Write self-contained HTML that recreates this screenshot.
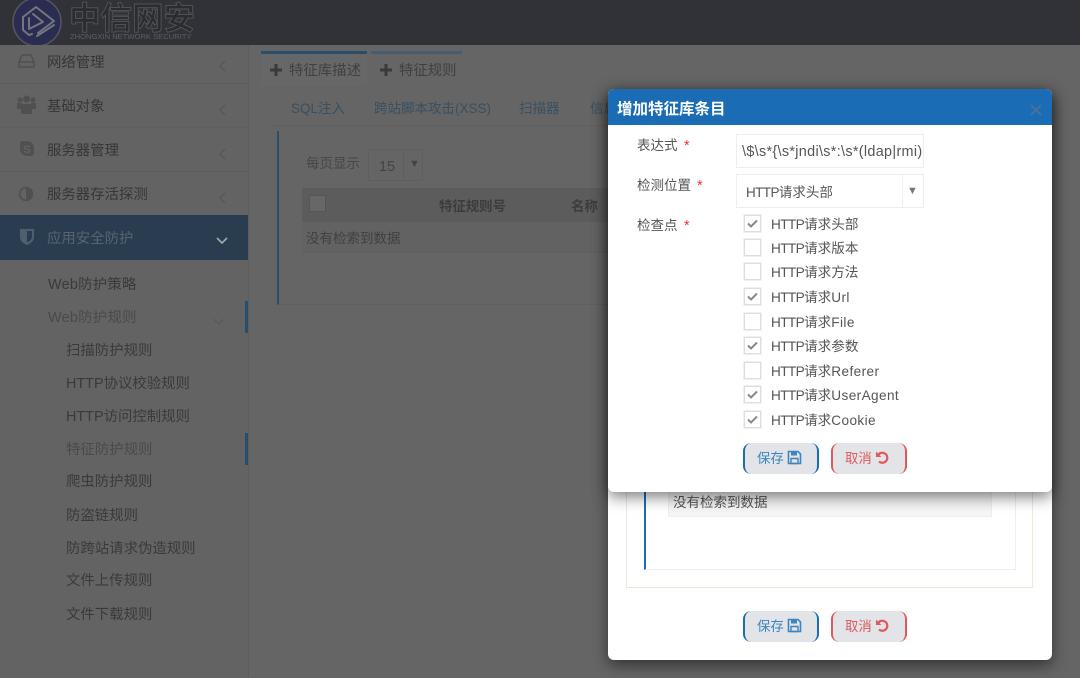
<!DOCTYPE html>
<html lang="zh"><head><meta charset="utf-8"><title>增加特征库条目</title>
<style>
html,body{margin:0;padding:0;width:1080px;height:678px;overflow:hidden;background:#656565}
body{position:relative;font:14.4px/20px "Liberation Sans","Noto Sans CJK SC",sans-serif;color:#333}
.a{position:absolute;white-space:nowrap}
.b{position:absolute}
.nav{color:#363636}
.sub{color:#3a3a3a}
.tab{color:#3a4f5f;font-size:13.5px}
.m{font-size:13.5px}
.cb{position:absolute;left:744px;width:15px;height:15px;border:1px solid #dedede;background:#fff;box-shadow:0 0 0 .5px #e2e2e2}
.cl{position:absolute;left:771px;color:#555;white-space:nowrap;font-size:13.6px}
.h{letter-spacing:-.6px}
.l{letter-spacing:.4px}
.btn{position:absolute;width:76px;height:31px;background:#e2e4e7;border-radius:8px;box-sizing:border-box;font-size:13.4px}
.bl{border-left:2px solid #1a6cb5;border-right:2px solid #1a6cb5;color:#3d85c0}
.rd{border-left:2px solid #dc5a5e;border-right:2px solid #dc5a5e;color:#de5a5e}
.btn span{position:absolute;left:12px;top:6px;white-space:nowrap}
.btn svg{position:absolute;left:42px;top:7px}
</style></head><body>

<!-- top bar -->
<div class="b" style="left:0;top:0;width:1080px;height:45px;background:#303237"></div>
<svg class="b" style="left:12px;top:0" width="52" height="45" viewBox="0 0 52 45">
<circle cx="25" cy="22" r="24" fill="#2b2c52" stroke="#55565f" stroke-width="1.5"/>
<g fill="none" stroke="#74767e" stroke-width="2" stroke-linejoin="round" stroke-linecap="round">
<path d="M11 17 L11 30 L17 35 L20 34"/>
<path d="M11 17 L24 7 L42 21 L26 33"/>
<path d="M17 18 L17 29 L31 22 L21 14"/>
<path d="M25 36 L42 25"/>
</g></svg>
<div class="a" style="left:69px;top:0;font-size:31.5px;line-height:36px;color:#2b2c30;-webkit-text-stroke:1px #505156;font-weight:bold">中信网安</div>
<div class="a" style="left:70px;top:33px;font-size:7.6px;line-height:8px;color:#5e5f63">ZHONGXIN NETWORK SECURITY</div>

<!-- sidebar -->
<div class="b" style="left:0;top:45px;width:248px;height:633px;background:#636363;border-right:1px solid #5e5e5e"></div>
<div class="b" style="left:0;top:83px;width:248px;height:1px;background:#5d5d5d"></div>
<div class="b" style="left:0;top:127px;width:248px;height:1px;background:#5f5f5f"></div>
<div class="b" style="left:0;top:171px;width:248px;height:1px;background:#5d5d5d"></div>
<div class="b" style="left:0;top:215px;width:248px;height:45px;background:#2a3d50"></div>

<svg class="b" style="left:18px;top:53px" width="17" height="16" viewBox="0 0 17 16"><path d="M4 2H13L16 9V14H1V9Z M1 9H16" fill="none" stroke="#4f4f4f" stroke-width="1.4"/></svg>
<svg class="b" style="left:16px;top:95px" width="21" height="20" viewBox="0 0 21 20" fill="#505050"><circle cx="4" cy="5" r="2.5"/><circle cx="17" cy="5" r="2.5"/><circle cx="10.5" cy="4" r="3.5"/><path d="M1 8h5v6H1zM15 8h5v6h-5z"/><path d="M5 9h11v8q0 2-2 2H7q-2 0-2-2z"/></svg>
<svg class="b" style="left:19px;top:140px" width="16" height="17" viewBox="0 0 16 17"><path d="M4 1h3q8 0 8 8v4q0 3-3 3H9Q1 16 1 8V4q0-3 3-3z" fill="#505050"/><text x="8" y="13" font-size="11" font-weight="bold" text-anchor="middle" fill="#636363" font-family="Liberation Sans">S</text></svg>
<svg class="b" style="left:18px;top:186px" width="16" height="16" viewBox="0 0 16 16"><circle cx="8" cy="8" r="7.2" fill="#505050"/><path d="M8 2.5a5.5 5.5 0 0 0 0 11z" fill="#636363"/></svg>
<svg class="b" style="left:20px;top:228px" width="14" height="17" viewBox="0 0 14 17"><path d="M0 1H14V9Q14 14 7 17Q0 14 0 9Z" fill="#505f6e"/><path d="M7 3H12V9Q12 12 7 14.5Z" fill="#2a3d50"/></svg>

<div class="a nav" style="left:47px;top:53px">网络管理</div>
<div class="a nav" style="left:47px;top:97px">基础对象</div>
<div class="a nav" style="left:47px;top:141px">服务器管理</div>
<div class="a nav" style="left:47px;top:185px">服务器存活探测</div>
<div class="a" style="left:47px;top:229px;color:#566472">应用安全防护</div>

<svg class="b" style="left:219px;top:60px" width="8" height="12" viewBox="0 0 8 12"><path d="M6 1 1 6l5 5" fill="none" stroke="#555" stroke-width="1.2"/></svg>
<svg class="b" style="left:219px;top:104px" width="8" height="12" viewBox="0 0 8 12"><path d="M6 1 1 6l5 5" fill="none" stroke="#555" stroke-width="1.2"/></svg>
<svg class="b" style="left:219px;top:148px" width="8" height="12" viewBox="0 0 8 12"><path d="M6 1 1 6l5 5" fill="none" stroke="#555" stroke-width="1.2"/></svg>
<svg class="b" style="left:219px;top:192px" width="8" height="12" viewBox="0 0 8 12"><path d="M6 1 1 6l5 5" fill="none" stroke="#555" stroke-width="1.2"/></svg>
<svg class="b" style="left:216px;top:237px" width="12" height="8" viewBox="0 0 12 8"><path d="M1 1l5 5 5-5" fill="none" stroke="#a4a9ae" stroke-width="1.6"/></svg>

<div class="a sub" style="left:48px;top:275px;letter-spacing:.25px">Web防护策略</div>
<div class="a" style="left:48px;top:308px;color:#4a4a4a;letter-spacing:.25px">Web防护规则</div>
<svg class="b" style="left:213px;top:318px" width="12" height="7" viewBox="0 0 12 7"><path d="M1 1l5 5 5-5" fill="none" stroke="#575757" stroke-width="1"/></svg>
<div class="b" style="left:245px;top:301px;width:3px;height:32px;background:#284e6d"></div>
<div class="a sub" style="left:66px;top:341px">扫描防护规则</div>
<div class="a sub" style="left:66px;top:374px">HTTP协议校验规则</div>
<div class="a sub" style="left:66px;top:407px">HTTP访问控制规则</div>
<div class="a" style="left:66px;top:440px;color:#4a4a4a">特征防护规则</div>
<div class="b" style="left:245px;top:433px;width:3px;height:32px;background:#284e6d"></div>
<div class="a sub" style="left:66px;top:472px">爬虫防护规则</div>
<div class="a sub" style="left:66px;top:506px">防盗链规则</div>
<div class="a sub" style="left:66px;top:539px">防跨站请求伪造规则</div>
<div class="a sub" style="left:66px;top:571px">文件上传规则</div>
<div class="a sub" style="left:66px;top:605px">文件下载规则</div>

<!-- main content -->
<div class="b" style="left:261px;top:51px;width:106px;height:3px;background:#284e6d"></div>
<div class="b" style="left:371px;top:51px;width:91px;height:3px;background:#465d70"></div>
<div class="b" style="left:261px;top:54px;width:106px;height:32px;background:#676767"></div>
<svg class="b" style="left:270px;top:64px" width="12" height="12" viewBox="0 0 12 12"><path d="M6 0v12M0 6h12" stroke="#3a3a3a" stroke-width="3"/></svg>
<div class="a" style="left:289px;top:61px;color:#404040">特征库描述</div>
<svg class="b" style="left:380px;top:64px" width="12" height="12" viewBox="0 0 12 12"><path d="M6 0v12M0 6h12" stroke="#3a3a3a" stroke-width="3"/></svg>
<div class="a" style="left:399px;top:61px;color:#404040">特征规则</div>

<div class="a tab" style="left:291px;top:99px">SQL注入</div>
<div class="a tab" style="left:374px;top:99px">跨站脚本攻击(XSS)</div>
<div class="a tab" style="left:519px;top:99px">扫描器</div>
<div class="a tab" style="left:590px;top:99px">信息</div>
<div class="b" style="left:272px;top:125px;width:340px;height:1px;background:#5f5f5f"></div>

<div class="b" style="left:277px;top:131px;width:331px;height:174px;border-left:2.5px solid #284e6d;border-bottom:1px solid #5f5f5f;box-sizing:border-box"></div>
<div class="a m" style="left:306px;top:154px;color:#464646">每页显示</div>
<div class="b" style="left:368px;top:149px;width:55px;height:32px;border:1px solid #5f5f5f;box-sizing:border-box"></div>
<div class="b" style="left:403px;top:149px;width:1px;height:32px;background:#5f5f5f"></div>
<div class="a" style="left:379px;top:157px;color:#444">15</div>
<div class="a" style="left:409px;top:154px;font-size:11px;color:#444">▼</div>
<div class="b" style="left:302px;top:188px;width:306px;height:34px;background:#5c5c5c"></div>
<div class="b" style="left:302px;top:222px;width:306px;height:31px;background:#626262;border-bottom:1px solid #5e5e5e;box-sizing:border-box"></div>
<div class="b" style="left:309px;top:195px;width:17px;height:17px;background:#676767;border:1px solid #555;box-sizing:border-box"></div>
<div class="a" style="left:439px;top:197px;font-weight:bold;color:#3c3c3c;font-size:13.4px">特征规则号</div>
<div class="a" style="left:571px;top:197px;font-weight:bold;color:#3c3c3c;font-size:13.4px">名称</div>
<div class="a m" style="left:306px;top:229px;color:#404040">没有检索到数据</div>

<!-- lower modal -->
<div class="b" style="left:608px;top:89px;width:444px;height:571px;background:#fff;border-radius:6px;box-shadow:0 5px 15px rgba(0,0,0,.5)"></div>
<div class="b" style="left:626px;top:480px;width:407px;height:108px;border:1px solid #e3edd8;box-sizing:border-box"></div>
<div class="b" style="left:644px;top:480px;width:372px;height:90px;border-right:1px solid #eee;border-bottom:1px solid #eee;border-left:2.5px solid #1a6cb5;box-sizing:border-box"></div>
<div class="b" style="left:668px;top:488px;width:324px;height:29px;background:#f5f5f5;border:1px solid #eee;box-sizing:border-box"></div>
<div class="a m" style="left:673px;top:493px;color:#555">没有检索到数据</div>
<div class="btn bl" style="left:743px;top:611px"><span>保存</span><svg width="15" height="15" viewBox="0 0 15 15"><path d="M1.5 1.5H11L13.5 4V13.5H1.5Z" fill="none" stroke="#3d85c0" stroke-width="1.6"/><path d="M4 1.5h6v4H4z" fill="#3d85c0"/><path d="M4 8.5h7v5H4z" fill="none" stroke="#3d85c0" stroke-width="1.4"/></svg></div>
<div class="btn rd" style="left:831px;top:611px"><span>取消</span><svg width="15" height="15" viewBox="0 0 15 15"><path d="M3.4 4.6A5 5 0 1 1 4 11.5" fill="none" stroke="#de5a5e" stroke-width="2.2"/><path d="M1 1.5V7H6.5Z" fill="#de5a5e"/></svg></div>

<!-- top modal -->
<div class="b" style="left:608px;top:89px;width:444px;height:403px;background:#fff;border-radius:6px;box-shadow:0 5px 15px rgba(0,0,0,.5)"></div>
<div class="b" style="left:608px;top:89px;width:444px;height:36px;background:#1a6cb5;border-radius:6px 6px 0 0"></div>
<div class="a" style="left:617px;top:100px;color:#fff;font-weight:bold;font-size:15.5px">增加特征库条目</div>
<svg class="b" style="left:1030px;top:104px" width="12" height="12" viewBox="0 0 12 12"><path d="M1 1l10 10M11 1 1 11" stroke="#45709c" stroke-width="2.2"/></svg>

<div class="a m" style="left:637px;top:136px;color:#555">表达式</div>
<div class="a" style="left:684px;top:136px;color:#e33">*</div>
<div class="a m" style="left:637px;top:176px;color:#555">检测位置</div>
<div class="a" style="left:697px;top:176px;color:#e33">*</div>
<div class="a m" style="left:637px;top:216px;color:#555">检查点</div>
<div class="a" style="left:684px;top:216px;color:#e33">*</div>

<div class="b" style="left:736px;top:134px;width:188px;height:34px;border:1px solid #eee;box-sizing:border-box"></div>
<div class="a" style="left:742px;top:142px;width:180px;overflow:hidden;color:#555;font-size:14.4px;letter-spacing:.32px">\$\s*{\s*jndi\s*:\s*(ldap|rmi)</div>
<div class="b" style="left:736px;top:174px;width:188px;height:34px;border:1px solid #eee;box-sizing:border-box"></div>
<div class="b" style="left:902px;top:175px;width:1px;height:32px;background:#eee"></div>
<div class="a m" style="left:746px;top:183px;color:#555"><span class="h">HTTP</span>请求头部</div>
<div class="a" style="left:907px;top:181px;font-size:11px;color:#777">▼</div>

<div class="cb" style="top:215px"><svg width="15" height="15" viewBox="0 0 15 15"><path d="M3 7.5l3 3 6-6" fill="none" stroke="#888" stroke-width="2"/></svg></div>
<div class="cl" style="top:215px"><span class="h">HTTP</span>请求头部</div>
<div class="cb" style="top:239px"></div>
<div class="cl" style="top:239px"><span class="h">HTTP</span>请求版本</div>
<div class="cb" style="top:263px"></div>
<div class="cl" style="top:263px"><span class="h">HTTP</span>请求方法</div>
<div class="cb" style="top:288px"><svg width="15" height="15" viewBox="0 0 15 15"><path d="M3 7.5l3 3 6-6" fill="none" stroke="#888" stroke-width="2"/></svg></div>
<div class="cl" style="top:288px"><span class="h">HTTP</span>请求<span class="l">Url</span></div>
<div class="cb" style="top:313px"></div>
<div class="cl" style="top:313px"><span class="h">HTTP</span>请求<span class="l">File</span></div>
<div class="cb" style="top:337px"><svg width="15" height="15" viewBox="0 0 15 15"><path d="M3 7.5l3 3 6-6" fill="none" stroke="#888" stroke-width="2"/></svg></div>
<div class="cl" style="top:337px"><span class="h">HTTP</span>请求参数</div>
<div class="cb" style="top:362px"></div>
<div class="cl" style="top:362px"><span class="h">HTTP</span>请求<span class="l">Referer</span></div>
<div class="cb" style="top:386px"><svg width="15" height="15" viewBox="0 0 15 15"><path d="M3 7.5l3 3 6-6" fill="none" stroke="#888" stroke-width="2"/></svg></div>
<div class="cl" style="top:386px"><span class="h">HTTP</span>请求<span class="l">UserAgent</span></div>
<div class="cb" style="top:411px"><svg width="15" height="15" viewBox="0 0 15 15"><path d="M3 7.5l3 3 6-6" fill="none" stroke="#888" stroke-width="2"/></svg></div>
<div class="cl" style="top:411px"><span class="h">HTTP</span>请求<span class="l">Cookie</span></div>

<div class="btn bl" style="left:743px;top:443px"><span>保存</span><svg width="15" height="15" viewBox="0 0 15 15"><path d="M1.5 1.5H11L13.5 4V13.5H1.5Z" fill="none" stroke="#3d85c0" stroke-width="1.6"/><path d="M4 1.5h6v4H4z" fill="#3d85c0"/><path d="M4 8.5h7v5H4z" fill="none" stroke="#3d85c0" stroke-width="1.4"/></svg></div>
<div class="btn rd" style="left:831px;top:443px"><span>取消</span><svg width="15" height="15" viewBox="0 0 15 15"><path d="M3.4 4.6A5 5 0 1 1 4 11.5" fill="none" stroke="#de5a5e" stroke-width="2.2"/><path d="M1 1.5V7H6.5Z" fill="#de5a5e"/></svg></div>
</body></html>
